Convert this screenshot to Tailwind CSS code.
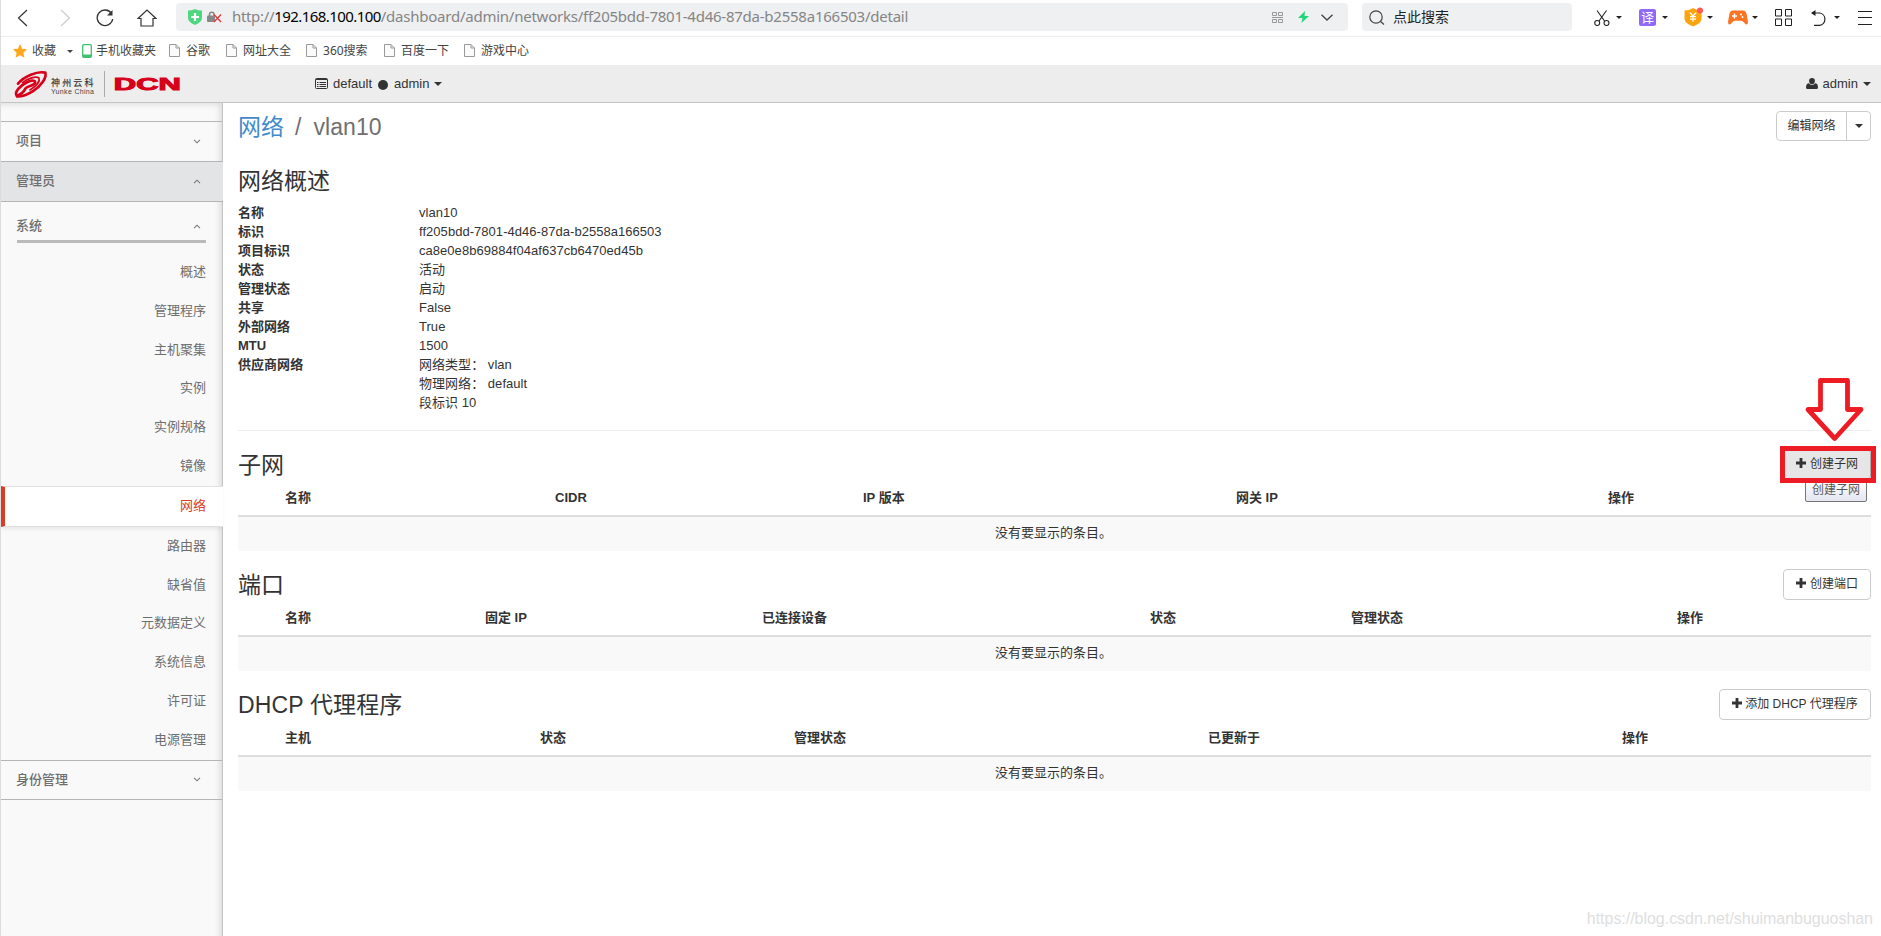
<!DOCTYPE html>
<html lang="zh-CN">
<head>
  <meta charset="UTF-8" />
  <meta name="viewport" content="width=device-width, initial-scale=1" />
  <title>网络详情 - vlan10</title>
  <script src="https://cdn.jsdelivr.net/npm/@tailwindcss/browser@4"></script>
  <style>
    body {
      font-family: 'Liberation Sans', 'Noto Sans CJK SC', sans-serif;
    }
    .ui {
      font-family: 'Noto Sans', 'Noto Sans CJK SC', sans-serif;
    }
  </style>
</head>
<body class="bg-white h-[936px] overflow-hidden flex flex-col border-l border-[#dcdcdc] text-[13px] leading-[19px] text-[#333]">
  <!-- shared icons -->
  <svg class="hidden">
    <symbol id="file" viewBox="0 0 11 13"><path d="M.5.5h6.5l3.5 3.5v8.5H.5z" fill="#fafafa" stroke="#999" /><path d="M7 .5V4h3.5" fill="none" stroke="#999" /></symbol>
    <symbol id="caret" viewBox="0 0 8 4"><path d="M0 0h8L4 4z" fill="currentColor" /></symbol>
    <symbol id="plus" viewBox="0 0 10 10"><path d="M3.6 0h2.8v3.6H10v2.8H6.4V10H3.6V6.4H0V3.6h3.6z" fill="currentColor" /></symbol>
    <symbol id="down" viewBox="0 0 8 5"><path d="M1 .8l3 3 3-3" fill="none" stroke="#777" stroke-width="1.1" /></symbol>
    <symbol id="up" viewBox="0 0 8 5"><path d="M1 4.2l3-3 3 3" fill="none" stroke="#777" stroke-width="1.1" /></symbol>
  </svg>

  <!-- Browser toolbar -->
  <div class="ui h-[37px] shrink-0 border-b border-[#ececec] flex items-start pl-4 pt-[3px] pr-[9px]">
    <div class="flex items-center h-7 pt-px w-[159px] text-[#333]">
      <svg class="w-3 h-[18px]" viewBox="0 0 12 18" fill="none" stroke="currentColor" stroke-width="1.2"><path d="M10 1L1.500 9l8.500 8" /></svg>
      <svg class="w-3 h-[18px] ml-[30px]" viewBox="0 0 12 18" fill="none" stroke="#ccc" stroke-width="1.2"><path d="M2 1l8.500 8L2 17" /></svg>
      <svg class="w-[18px] h-[18px] ml-[25px]" viewBox="0 0 18 18" fill="none" stroke="currentColor" stroke-width="1.300"><path d="M15.500 4.500A7.800 7.800 0 1 0 16.700 10" /><path d="M16.500 1v5.500H11z" fill="currentColor" stroke="none" /></svg>
      <svg class="w-5 h-[18px] ml-[23px]" viewBox="0 0 20 18" fill="none" stroke="currentColor" stroke-width="1.200"><path d="M1 9.500L10 1l9 8.500h-3V17H4V9.500z" /></svg>
    </div>

    <div class="flex items-center w-[1172px] h-7 bg-[#eff0f2] rounded pl-3 pr-[15px]">
      <svg class="w-[14px] h-4" viewBox="0 0 14 16"><path d="M0 1.500Q4 1.500 7 0q3 1.500 7 1.500V9q0 4-7 7-7-3-7-7z" fill="#4fd77f" /><path d="M7 4v8M3 8h8" stroke="#fff" stroke-width="2.200" /></svg>
      <svg class="w-[15px] h-3 ml-[5px]" viewBox="0 0 15 12"><path d="M2.500 5V3.500a2.200 2.200 0 0 1 4.500 0V5" fill="none" stroke="#888" stroke-width="1.600" /><rect y="4.500" width="8" height="6.500" rx="1" fill="#888" /><path d="M7 3.500l7 7.500M14 3.500L7 11" stroke="#e5383b" stroke-width="1.300" /></svg>
      <div class="ml-[10px] -mt-px text-[15px] text-[#858585] whitespace-nowrap"><span class="tracking-[-0.34px]">http://</span><span class="text-black tracking-[-0.56px]">192.168.100.100</span><span class="tracking-[-0.240px]">/dashboard/admin/networks/ff205bdd-7801-4d46-87da-b2558a166503/detail</span></div>
      <svg class="w-[11px] h-[11px] ml-auto" viewBox="0 0 11 11" fill="none" stroke="#999"><path d="M.5.5h4v3h-4zM6.500.5h4v3h-4zM.5 7.500h4v3h-4zM6.500 7.500h4v3h-4zM0 5.500h11" /></svg>
      <svg class="w-[11px] h-3 ml-[15px]" viewBox="0 0 11 12"><path d="M7 0L0 7h4.500L3.500 12 11 5H6.500z" fill="#20d67b" /></svg>
      <svg class="w-3 h-[7px] ml-[12px]" viewBox="0 0 12 7" fill="none" stroke="#444" stroke-width="1.300"><path d="M.5.7L6 6l5.500-5.300" /></svg>
    </div>

    <div class="flex items-center w-[210px] h-7 ml-[14px] bg-[#eff0f2] rounded pl-[7px] text-[14px] text-[#222]">
      <svg class="w-4 h-[15px]" viewBox="0 0 16 15" fill="none" stroke="#444" stroke-width="1.200"><circle cx="7" cy="7" r="6.200" /><path d="M11.300 11.200l3.700 3.300" /></svg>
      <span class="ml-2 -mt-px">点此搜索</span>
    </div>

    <div class="flex items-center h-7 flex-1 pl-[22px] pt-px text-[#222]">
      <svg class="w-4 h-4" viewBox="0 0 16 16" fill="none" stroke="currentColor" stroke-width="1.100"><path d="M3 .5l7.500 10.500M12.500.5L5 11" /><circle cx="3.200" cy="13" r="2.500" /><circle cx="12.500" cy="13" r="2.500" /></svg>
      <svg class="w-[6px] h-[3px] ml-[6px]"><use href="#caret" /></svg>
      <span class="w-[17px] h-[17px] ml-[17px] -mt-px bg-[#9169f8] rounded-[2px] text-white text-[13px] leading-[16px] text-center">译</span>
      <svg class="w-[6px] h-[3px] ml-[6px]"><use href="#caret" /></svg>
      <svg class="w-[19px] h-5 ml-4 -mt-px" viewBox="0 0 19 20"><path d="M.5 3.500Q5 3.500 9 1q4 2.500 8.500 2.500V12q0 4-8.500 7.500Q.5 16 .5 12z" fill="#fda30d" /><path d="M5.800 5.500L9 9l3.200-3.500M9 9v6M6 9.700h6M6 12.200h6" fill="none" stroke="#fff" stroke-width="1.200" /><circle cx="16" cy="3.500" r="3" fill="#fb5a5a" /></svg>
      <svg class="w-[6px] h-[3px] ml-[4px]"><use href="#caret" /></svg>
      <svg class="w-5 h-[15px] ml-[15px]" viewBox="0 0 20 15"><path d="M5 .5h10q3 0 3.700 4L20 12q0 2.500-1.500 2.500-1 0-2.500-2-1.500-1.800-3-1.800H7q-1.500 0-3 1.800-1.500 2-2.500 2Q0 14.500 0 12L1.300 4.500Q2 .5 5 .5z" fill="#fb7424" /><path d="M6.500 3.500v5M4 6h5" stroke="#fff" stroke-width="1.400" /><circle cx="13" cy="4.500" r="1" fill="#fff" /><circle cx="14.500" cy="7" r="1" fill="#fff" /></svg>
      <svg class="w-[6px] h-[3px] ml-[4px]"><use href="#caret" /></svg>
      <svg class="w-[17px] h-[17px] ml-[17px]" viewBox="0 0 17 17" fill="none" stroke="currentColor"><path d="M.5.500h6v6.500h-6zM10.500.500h6v6.500h-6zM.5 10h6v6.500h-6zM10.500 10h6v6.500h-6z" /></svg>
      <svg class="w-4 h-4 ml-[19px]" viewBox="0 0 16 16" fill="none" stroke="currentColor" stroke-width="1.200"><path d="M1 3h7.500a6.200 6.200 0 0 1 0 12.300H3" /><path d="M4.500 0v6L0 3z" fill="currentColor" stroke="none" /></svg>
      <svg class="w-[6px] h-[3px] ml-[7px]"><use href="#caret" /></svg>
      <svg class="w-[14px] h-[14px] ml-auto" viewBox="0 0 14 14" stroke="currentColor"><path d="M0 .5h14M0 6.500h14M0 13.500h14" /></svg>
    </div>
  </div>

  <!-- Bookmarks -->
  <div class="ui h-7 shrink-0 flex items-center pl-3 pb-px text-[12px] text-[#444] whitespace-nowrap">
    <svg class="w-[14px] h-[14px]" viewBox="0 0 14 14"><path d="M7 0l2.100 4.700 4.900.6-3.600 3.400 1 5.100L7 11.200l-4.400 2.600 1-5.100L0 5.300l4.900-.6z" fill="#ffa81e" /></svg>
    <span class="ml-[5px]">收藏</span>
    <svg class="w-[6px] h-[3px] ml-[11px] mt-[2px]"><use href="#caret" /></svg>
    <svg class="w-[10px] h-[14px] ml-[9px]" viewBox="0 0 10 14"><rect x=".7" y=".7" width="8.600" height="12.600" rx="1" fill="#fff" stroke="#3fbf6f" stroke-width="1.300" /><path d="M1 10.500h8V13H1z" fill="#3fbf6f" /></svg>
    <span class="ml-[4px]">手机收藏夹</span>
    <a class="flex items-center w-[57px] ml-[13px]"><svg class="w-[11px] h-[13px] mr-[6px]"><use href="#file" /></svg>谷歌</a>
    <a class="flex items-center w-[80px]"><svg class="w-[11px] h-[13px] mr-[6px]"><use href="#file" /></svg>网址大全</a>
    <a class="flex items-center w-[78px]"><svg class="w-[11px] h-[13px] mr-[6px]"><use href="#file" /></svg>360搜索</a>
    <a class="flex items-center w-[80px]"><svg class="w-[11px] h-[13px] mr-[6px]"><use href="#file" /></svg>百度一下</a>
    <a class="flex items-center"><svg class="w-[11px] h-[13px] mr-[6px]"><use href="#file" /></svg>游戏中心</a>
  </div>

  <!-- Dashboard header -->
  <header class="h-[38px] shrink-0 bg-[#ededed] border-b border-[#c4c4c4] flex items-center">
    <svg class="w-[175px] h-[37px] ml-[10px]" viewBox="11 65 175 37">
      <g transform="translate(8 66) scale(.3333)" fill="none" stroke="#d7001b" stroke-linecap="round" stroke-linejoin="round">
        <path d="M30 53C48 31 88 14 112 20C117 34 100 60 74 76C56 87 40 92 27 91" stroke-width="8" />
        <path d="M27 90C17 80 36 58 60 47C74 41 84 44 81 51C77 60 58 60 52 68C48 77 40 84 27 90" stroke-width="8" />
        <path d="M44 50C60 36 84 30 93 36C96 44 88 58 66 72" stroke-width="5" />
      </g>
      <text x="51" y="86" font-size="9" textLength="42.500" fill="#333" stroke="#333" stroke-width=".15" font-family="Noto Sans CJK SC">神州云科</text>
      <text x="51" y="94" font-size="7" textLength="43" fill="#444" font-family="Liberation Sans">Yunke China</text>
      <path d="M104.500 71v26" stroke="#aaa" />
      <text x="0" y="0" transform="translate(113.800 90.300) scale(1.900 1)" font-size="16.300" font-weight="bold" fill="#d7001b" stroke="#d7001b" stroke-width="1" font-family="Liberation Sans">DCN</text>
    </svg>
    <div class="flex items-center ml-[129px]">
      <svg class="w-[13px] h-[11px]" viewBox="0 0 13 11"><rect x=".5" y=".5" width="12" height="10" rx="1" fill="none" stroke="#333" /><path d="M1 1.500h11M2 4.500h1.500M4.500 4.500H11M2 6.500h1.500M4.500 6.500H11M2 8.500h1.500M4.500 8.500H11" stroke="#333" /></svg>
      <span class="ml-[5px]">default</span>
      <span class="w-[10px] h-[10px] rounded-full bg-[#333] ml-[6px] mt-[2px]"></span>
      <span class="ml-[6px]">admin</span>
      <svg class="w-2 h-1 ml-[5px]"><use href="#caret" /></svg>
    </div>
    <div class="flex items-center ml-auto mr-[10px]">
      <svg class="w-3 h-[11px]" viewBox="0 0 12 11"><path d="M6 0a2.900 2.900 0 0 1 2.900 3C8.900 5 7.700 6.300 6 6.300S3.100 5 3.100 3A2.900 2.900 0 0 1 6 0zM2.800 5.300Q4 7 6 7t3.200-1.700Q12 5.500 12 9.500q0 1.500-1.500 1.500h-9Q0 11 0 9.500 0 5.500 2.800 5.300z" fill="#333" /></svg>
      <span class="ml-[5px]">admin</span>
      <svg class="w-2 h-1 ml-[5px]"><use href="#caret" /></svg>
    </div>
  </header>

  <div class="flex flex-1 min-h-0">
    <!-- Sidebar -->
    <aside class="w-[222px] shrink-0 bg-[#f9f9f9] border-r border-[#c4c4c4] shadow-[inset_-4px_3px_6px_-2px_rgba(0,0,0,0.13)] text-[#6e6e6e]">
      <div class="h-[18px]"></div>
      <div class="h-[40px] border-t border-[#b5b5b5] flex items-center justify-between pl-[15px] pr-[21px] pb-[2px] font-medium">项目<svg class="w-2 h-[5px] mt-[2px]"><use href="#down" /></svg></div>
      <div class="h-[41px] -mr-px border-y border-[#b5b5b5] bg-[#e3e4e6] flex items-center justify-between pl-[15px] pr-[22px] pb-[3px] font-medium">管理员<svg class="w-2 h-[5px] mt-[3px]"><use href="#up" /></svg></div>
      <div class="h-[41px] ml-4 mr-4 border-b-3 border-[#bbb] flex items-center justify-between pr-[5px] pt-[9px] font-medium"><span class="-ml-px">系统</span><svg class="w-2 h-[5px] mt-px"><use href="#up" /></svg></div>
      <ul class="pt-[10px] text-right">
        <li class="h-[38.800px] leading-[38.800px] pr-4">概述</li>
        <li class="h-[38.800px] leading-[38.800px] pr-4">管理程序</li>
        <li class="h-[38.800px] leading-[38.800px] pr-4">主机聚集</li>
        <li class="h-[38.800px] leading-[38.800px] pr-4">实例</li>
        <li class="h-[38.800px] leading-[38.800px] pr-4">实例规格</li>
        <li class="h-[38.800px] leading-[38.800px] pr-4">镜像</li>
        <li class="relative h-[41px] leading-[37px] pr-[17px] -mr-px bg-white border-y border-y-[#e0e0e0] border-l-4 border-l-[#d93c28] text-[#d93c28] shadow-[0_3px_4px_-1px_rgba(0,0,0,0.08)]">网络</li>
        <li class="h-[38.800px] leading-[37.500px] pr-4">路由器</li>
        <li class="h-[38.800px] leading-[37.500px] pr-4">缺省值</li>
        <li class="h-[38.800px] leading-[38.800px] pr-4">元数据定义</li>
        <li class="h-[38.800px] leading-[38.800px] pr-4">系统信息</li>
        <li class="h-[38.800px] leading-[37.500px] pr-4">许可证</li>
        <li class="h-[38.800px] leading-[37.500px] pr-4">电源管理</li>
      </ul>
      <div class="h-[40px] border-y border-[#b5b5b5] flex items-center justify-between pl-[15px] pr-[21px] pb-px font-medium">身份管理<svg class="w-2 h-[5px] mt-px"><use href="#down" /></svg></div>
    </aside>

    <!-- Content -->
    <main class="relative flex-1 pl-[15px] pr-[10px]">
      <div class="h-[62px] pt-2 flex justify-between items-start">
        <h1 class="text-[23px] leading-[33px] text-[#6f6f6f] whitespace-pre"><a class="text-[#428bca]">网络</a><span class="pl-[11px] pr-[12px]">/</span><span class="tracking-[0.100px]">vlan10</span></h1>
        <div class="flex h-[30px] border border-[#ccc] rounded text-[12px] leading-[28px]">
          <span class="w-[70px] text-center border-r border-[#ccc]">编辑网络</span>
          <span class="w-[23px] flex items-center justify-center"><svg class="w-2 h-1"><use href="#caret" /></svg></span>
        </div>
      </div>
      <h2 class="text-[23px] leading-[32px] h-[38px]">网络概述</h2>
      <dl class="grid grid-cols-[181px_1fr] auto-rows-[19px] tracking-[0.040px]">
        <dt class="font-bold">名称</dt><dd>vlan10</dd>
        <dt class="font-bold">标识</dt><dd>ff205bdd-7801-4d46-87da-b2558a166503</dd>
        <dt class="font-bold">项目标识</dt><dd>ca8e0e8b69884f04af637cb6470ed45b</dd>
        <dt class="font-bold">状态</dt><dd>活动</dd>
        <dt class="font-bold">管理状态</dt><dd>启动</dd>
        <dt class="font-bold">共享</dt><dd>False</dd>
        <dt class="font-bold">外部网络</dt><dd>True</dd>
        <dt class="font-bold">MTU</dt><dd>1500</dd>
        <dt class="font-bold">供应商网络</dt><dd>网络类型： vlan</dd>
        <dd class="col-start-2">物理网络： default</dd>
        <dd class="col-start-2">段标识 10</dd>
      </dl>
      <hr class="mt-[18px] border-[#eee]" />

      <section class="h-[120px] pt-[18px]">
        <div class="flex justify-between h-[37px]">
          <h2 class="text-[23px] leading-[32px]">子网</h2>
          <a class="relative w-[88px] h-[31px] border border-[#adadad] bg-[#e6e6e6] rounded text-[12px] leading-[28px] flex justify-center"><svg class="w-[10px] h-[10px] mr-1 mt-[8px]"><use href="#plus" /></svg>创建子网
            <span class="absolute top-[30px] left-[21px] w-[62px] h-[22px] border border-[#767676] rounded-[2px] bg-linear-to-b from-white to-[#e4e5f0] text-[#575757] leading-[19px] text-center">创建子网</span>
            <span class="absolute -top-[4px] -left-[4px] w-[96px] h-[37px] border-5 border-[#ed1c24]"></span>
          </a>
        </div>
        <div class="grid grid-cols-[270px_308px_373px_372px_1fr] pl-[47px] h-[31px] border-b-2 border-[#ddd] font-bold leading-[23px]">
          <span>名称</span><span>CIDR</span><span>IP 版本</span><span>网关 IP</span><span>操作</span>
        </div>
        <div class="h-[34px] bg-[#f9f9f9] pr-[2px] text-center leading-[32px]">没有要显示的条目。</div>
      </section>

      <section class="h-[120px] pt-[18px]">
        <div class="flex justify-between h-[37px]">
          <h2 class="text-[23px] leading-[32px]">端口</h2>
          <a class="w-[88px] h-[31px] border border-[#ccc] rounded text-[12px] leading-[28px] flex justify-center"><svg class="w-[10px] h-[10px] mr-1 mt-[8px]"><use href="#plus" /></svg>创建端口</a>
        </div>
        <div class="grid grid-cols-[200px_277px_388px_201px_326px_1fr] pl-[47px] h-[31px] border-b-2 border-[#ddd] font-bold leading-[23px]">
          <span>名称</span><span>固定 IP</span><span>已连接设备</span><span>状态</span><span>管理状态</span><span>操作</span>
        </div>
        <div class="h-[34px] bg-[#f9f9f9] pr-[2px] text-center leading-[32px]">没有要显示的条目。</div>
      </section>

      <section class="h-[120px] pt-[18px]">
        <div class="flex justify-between h-[37px]">
          <h2 class="text-[23px] leading-[32px] tracking-[0.150px]">DHCP 代理程序</h2>
          <a class="w-[152px] h-[31px] border border-[#ccc] rounded text-[12px] leading-[28px] flex justify-center"><svg class="w-[10px] h-[10px] mr-[3px] mt-[8px]"><use href="#plus" /></svg>添加 DHCP 代理程序</a>
        </div>
        <div class="grid grid-cols-[255px_254px_414px_414px_1fr] pl-[47px] h-[31px] border-b-2 border-[#ddd] font-bold leading-[23px]">
          <span>主机</span><span>状态</span><span>管理状态</span><span>已更新于</span><span>操作</span>
        </div>
        <div class="h-[34px] bg-[#f9f9f9] pr-[2px] text-center leading-[32px]">没有要显示的条目。</div>
      </section>

      <!-- Arrow pointing at the create subnet button -->
      <svg class="absolute top-[271px] right-[15px] w-[63px] h-[69px]" viewBox="0 0 63 69"><path d="M17.500 6.500h27v29H58L31.700 64.500 5 35.500h12.500z" fill="#fff" stroke="#ed1c24" stroke-width="4.800" stroke-linejoin="round" /></svg>

      <div class="absolute bottom-[8px] right-[8px] text-[16px] tracking-[-0.030px] text-[#dedede]">https://blog.csdn.net/shuimanbuguoshan</div>
    </main>
  </div>
</body>
</html>
